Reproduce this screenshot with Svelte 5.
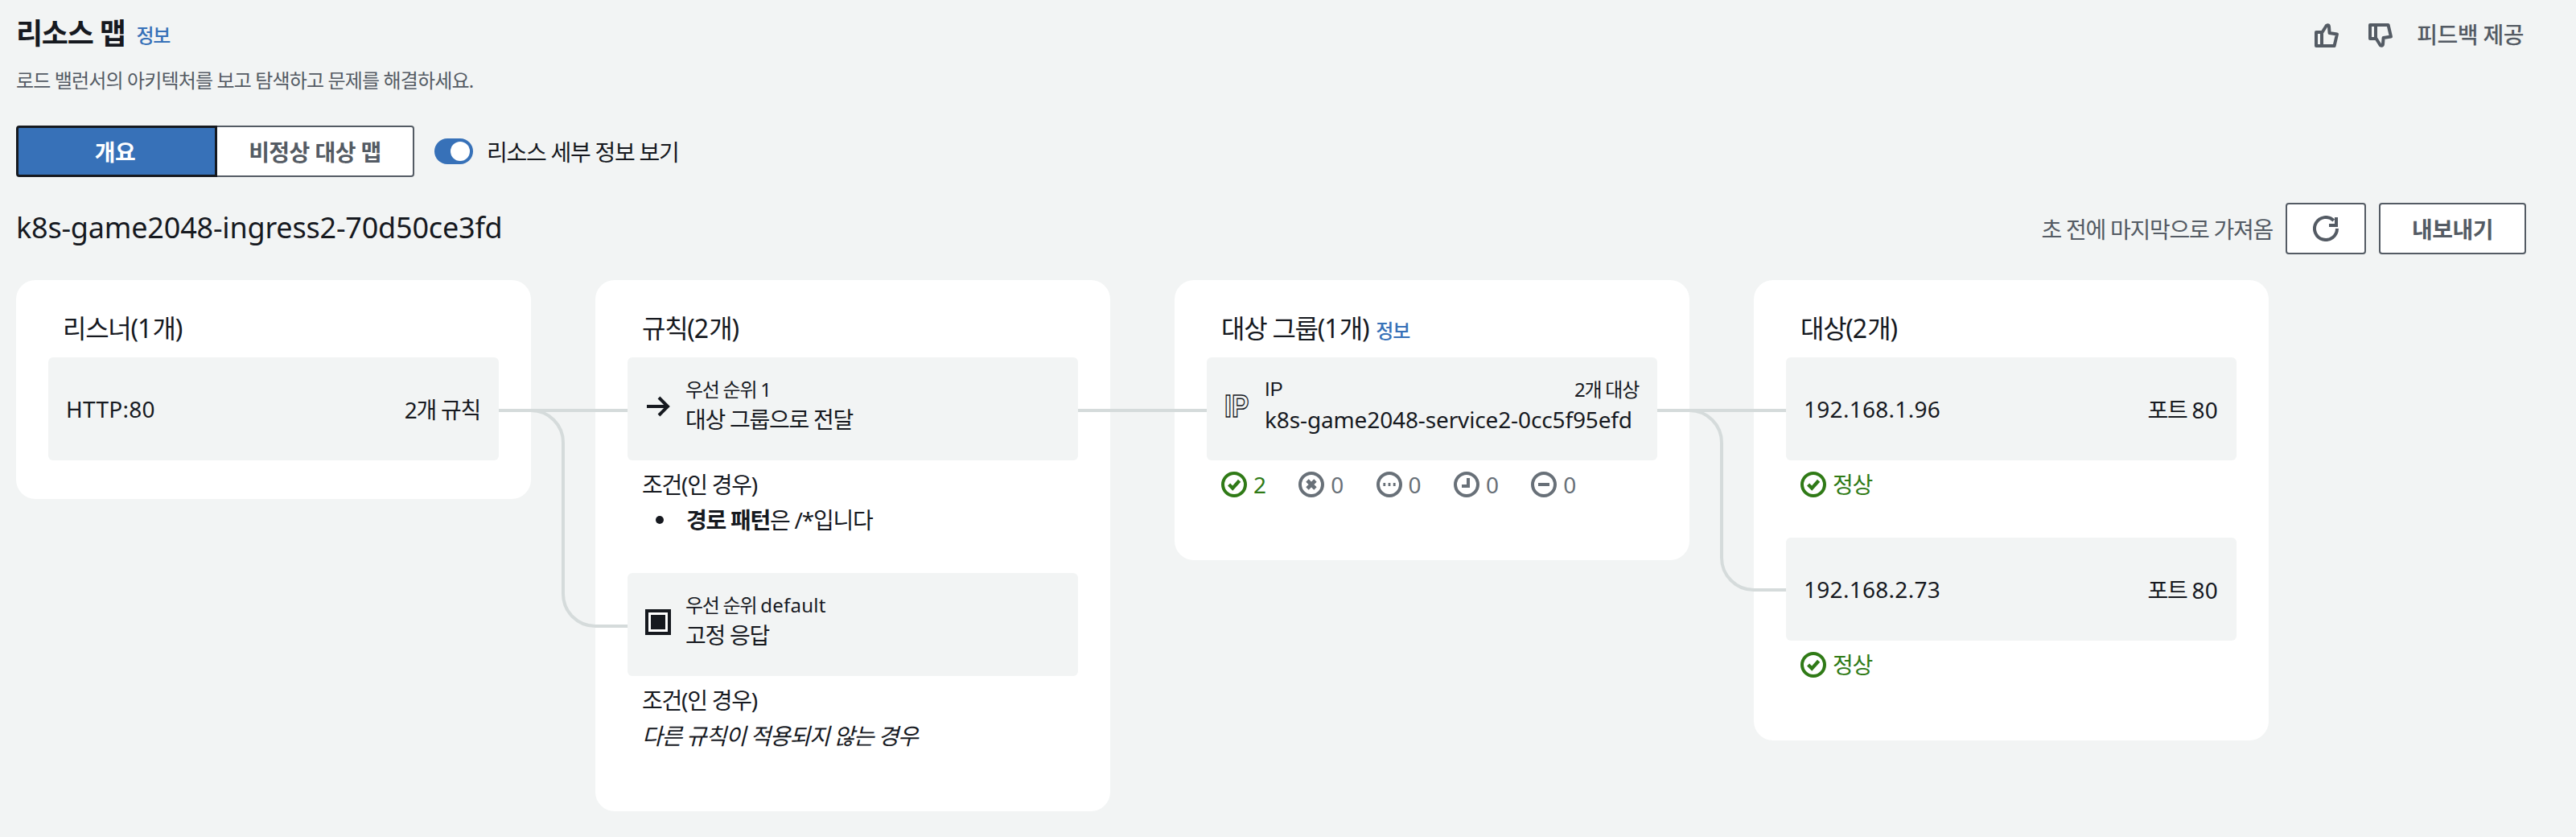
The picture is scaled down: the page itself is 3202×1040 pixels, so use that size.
<script>
  const listeners = [{ name: 'HTTP:80', rules: '2개 규칙' }];
  const counts = [
    { kind: 'ok', n: 2 },
    { kind: 'err', n: 0 },
    { kind: 'pending', n: 0 },
    { kind: 'time', n: 0 },
    { kind: 'minus', n: 0 }
  ];
  const targets = [
    { ip: '192.168.1.96', port: '포트', num: '80' },
    { ip: '192.168.2.73', port: '포트', num: '80' }
  ];
  const thumb = 'M1.500 6H5V14.500H1.500ZM5 6.500L7.500 2.500C7.800 1.600 9.300 1.200 9.500 2.500L9.800 6.500L14.500 7.200L12.800 14.500H5';
</script>

{#snippet status(kind)}
  <svg class="sicon" viewBox="0 0 16 16" aria-hidden="true">
    <circle cx="8" cy="8" r="7" fill="none" stroke="currentColor" stroke-width="2" />
    {#if kind === 'ok'}
      <path d="M4.800 8l2.300 2.300L11.300 5.600" fill="none" stroke="currentColor" stroke-width="2.200" />
    {:else if kind === 'err'}
      <path d="M5.500 5.500l5 5M10.500 5.500l-5 5" fill="none" stroke="currentColor" stroke-width="2.400" />
    {:else if kind === 'pending'}
      <path d="M4.200 8h1.400M7.300 8h1.400M10.400 8h1.400" fill="none" stroke="currentColor" stroke-width="2" />
    {:else if kind === 'time'}
      <path d="M9 4v5H5" fill="none" stroke="currentColor" stroke-width="2" />
    {:else}
      <path d="M4.500 8h7" fill="none" stroke="currentColor" stroke-width="2" />
    {/if}
  </svg>
{/snippet}

<main class="page">
  <header class="top">
    <div class="title-row">
      <h1>리소스 맵</h1>
      <a class="info">정보</a>
      <div class="feedback">
        <svg class="thumb" viewBox="0 0 16 16" aria-hidden="true"><path d={thumb} /></svg>
        <svg class="thumb down" viewBox="0 0 16 16" aria-hidden="true"><path d={thumb} transform="matrix(1 0 0 -1 0 16)" /></svg>
        <span class="fb-text">피드백 제공</span>
      </div>
    </div>
    <p class="sub">로드 밸런서의 아키텍처를 보고 탐색하고 문제를 해결하세요.</p>
    <div class="controls">
      <div class="tabs">
        <button class="tab on">개요</button>
        <button class="tab off">비정상 대상 맵</button>
      </div>
      <span class="toggle"><i></i></span>
      <span class="toggle-label">리소스 세부 정보 보기</span>
    </div>
    <div class="lb-row">
      <h2>k8s-game2048-ingress2-70d50ce3fd</h2>
      <div class="actions">
        <span class="fetched">초 전에 마지막으로 가져옴</span>
        <button class="btn icon-btn" aria-label="새로 고침">
          <svg viewBox="0 0 16 16" aria-hidden="true"><path d="M12.900 3A7 7 0 1 0 15 8M14.500 1V6H10" /></svg>
        </button>
        <button class="btn export">내보내기</button>
      </div>
    </div>
  </header>

  <section class="diagram">
    <svg class="wires" width="2800" height="660" viewBox="0 0 2800 660" aria-hidden="true">
      <path d="M600 162H760M600 162H640a40 40 0 0 1 40 40V390a40 40 0 0 0 40 40H760" />
      <path d="M1320 162H1480" />
      <path d="M2040 162H2200M2040 162H2080a40 40 0 0 1 40 40V345a40 40 0 0 0 40 40H2200" />
    </svg>

    <article class="card">
      <h3>리스너(<span class="la">1</span>개)</h3>
      {#each listeners as l}
        <div class="row"><span class="la">{l.name}</span><span>{l.rules}</span></div>
      {/each}
    </article>

    <article class="card">
      <h3>규칙(<span class="la">2</span>개)</h3>
      <div class="row rule">
        <svg class="ricon" viewBox="0 0 16 16" aria-hidden="true"><path d="M1 8h13M8.500 2.500L14 8l-5.500 5.500" /></svg>
        <div class="stack">
          <small>우선 순위 <span class="la">1</span></small>
          <span>대상 그룹으로 전달</span>
        </div>
      </div>
      <div class="cond">
        <div class="cond-h">조건(인 경우)</div>
        <ul><li><span><b>경로 패턴</b>은 /*입니다</span></li></ul>
      </div>
      <div class="row rule">
        <span class="fixed"><i></i></span>
        <div class="stack">
          <small>우선 순위 <span class="la">default</span></small>
          <span>고정 응답</span>
        </div>
      </div>
      <div class="cond last">
        <div class="cond-h">조건(인 경우)</div>
        <em>다른 규칙이 적용되지 않는 경우</em>
      </div>
    </article>

    <article class="card">
      <h3>대상 그룹(<span class="la">1</span>개) <a class="info">정보</a></h3>
      <div class="row rule">
        <span class="ip">IP</span>
        <div class="stack grow">
          <small class="split"><span class="plain">IP</span><span>2개 대상</span></small>
          <span class="name">k8s-game2048-service2-0cc5f95efd</span>
        </div>
      </div>
      <div class="statuses">
        {#each counts as c}
          <span class="stat {c.kind === 'ok' ? 'green' : 'grey'}">{@render status(c.kind)}<span class="la">{c.n}</span></span>
        {/each}
      </div>
    </article>

    <article class="card">
      <h3>대상(<span class="la">2</span>개)</h3>
      {#each targets as t}
        <div class="target">
          <div class="row"><span class="la">{t.ip}</span><span>{t.port} <span class="la">{t.num}</span></span></div>
          <div class="statuses one">
            <span class="stat green">{@render status('ok')}정상</span>
          </div>
        </div>
      {/each}
    </article>
  </section>
</main>

<style>
  :global(body) {
    margin: 0;
    background: #f2f4f4;
  }
  .page {
    box-sizing: border-box;
    width: 3202px;
    height: 1040px;
    padding: 20px 62px 0 20px;
    background: #f2f4f4;
    color: #16191f;
    font-family: "Noto Sans", "Noto Sans CJK KR", sans-serif;
    font-size: 28px;
    letter-spacing: -0.045em;
    overflow: hidden;
  }
  h1, h2, h3, p, ul { margin: 0; padding: 0; font-weight: 400; }
  .la { letter-spacing: 0.01em; }
  .plain { font-family: "Liberation Sans", sans-serif; letter-spacing: 0; }
  .title-row {
    display: flex;
    align-items: center;
    height: 44px;
  }
  h1 {
    font-size: 36px;
    font-weight: 700;
    line-height: 44px;
  }
  .info {
    color: #3771b8;
    font-size: 24px;
    font-weight: 500;
    margin-left: 14px;
    line-height: 32px;
    padding-top: 4px;
  }
  .feedback {
    margin-left: auto;
    margin-right: 3px;
    display: flex;
    align-items: center;
    color: #545b64;
  }
  .thumb {
    width: 32px;
    height: 32px;
    fill: none;
    stroke: #545b64;
    stroke-width: 2;
    stroke-linejoin: round;
    margin: 4px 35px 0 0;
  }
  .thumb.down { margin-right: 29px; }
  .fb-text { font-weight: 500; letter-spacing: -0.02em; }
  .sub {
    margin-top: 16px;
    line-height: 40px;
    font-size: 24px;
    letter-spacing: -0.036em;
    color: #545b64;
  }
  .controls {
    display: flex;
    align-items: center;
    margin-top: 36px;
    height: 64px;
  }
  .tabs { display: flex; }
  .tab {
    box-sizing: border-box;
    height: 64px;
    font: inherit;
    font-weight: 700;
    letter-spacing: -0.02em;
    padding: 0;
    border-radius: 4px;
    background: #fff;
  }
  .tab.on {
    width: 250px;
    background: #3771b8;
    color: #fff;
    border: 3px solid #16191f;
    border-radius: 4px 0 0 4px;
    padding-right: 4px;
  }
  .tab.off {
    width: 245px;
    color: #545b64;
    border: 2px solid #545b64;
    border-left: none;
    border-radius: 0 4px 4px 0;
  }
  .toggle {
    box-sizing: border-box;
    width: 48px;
    height: 32px;
    border-radius: 16px;
    background: #3771b8;
    margin-left: 25px;
    position: relative;
  }
  .toggle i {
    position: absolute;
    right: 4px;
    top: 4px;
    width: 24px;
    height: 24px;
    border-radius: 50%;
    background: #fff;
  }
  .toggle-label { margin-left: 17px; }
  .lb-row {
    display: flex;
    align-items: center;
    justify-content: space-between;
    margin-top: 32px;
    height: 64px;
  }
  h2 { font-size: 36px; line-height: 44px; letter-spacing: -0.2px; margin-top: -2px; }
  .actions { display: flex; align-items: center; }
  .fetched { color: #545b64; margin-right: 16px; }
  .btn {
    box-sizing: border-box;
    height: 64px;
    border: 2px solid #545b64;
    border-radius: 4px;
    background: #fff;
    color: #545b64;
    font: inherit;
    font-weight: 700;
    letter-spacing: -0.02em;
    padding: 0;
    display: flex;
    align-items: center;
    justify-content: center;
  }
  .icon-btn { width: 100px; }
  .icon-btn svg {
    width: 32px;
    height: 32px;
    fill: none;
    stroke: #545b64;
    stroke-width: 2;
  }
  .export { width: 183px; margin-left: 16px; }
  .diagram {
    position: relative;
    display: grid;
    grid-template-columns: repeat(4, 640px);
    gap: 80px;
    align-items: start;
    margin-top: 32px;
  }
  .wires {
    position: absolute;
    left: 0;
    top: 0;
    fill: none;
    stroke: #d5dbdb;
    stroke-width: 4;
    z-index: 1;
  }
  .card {
    box-sizing: border-box;
    background: #fff;
    border-radius: 24px;
    padding: 40px 40px 48px;
  }
  h3 {
    font-size: 32px;
    line-height: 40px;
    margin: 0 0 16px 18px;
  }
  h3 .info { margin-left: 2px; padding: 0; }
  .row {
    box-sizing: border-box;
    height: 128px;
    background: #f2f4f4;
    border-radius: 6px;
    padding: 0 23px 0 22px;
    display: flex;
    align-items: center;
    justify-content: space-between;
  }
  .row.rule {
    justify-content: flex-start;
    padding-bottom: 6px;
  }
  .ricon {
    width: 32px;
    height: 32px;
    fill: none;
    stroke: #16191f;
    stroke-width: 2;
    flex: none;
    margin-right: 18px;
  }
  .stack { display: flex; flex-direction: column; }
  .grow { flex: 1; }
  .stack small { font-size: 24px; line-height: 32px; }
  .stack > span { line-height: 42px; }
  .stack > .name { letter-spacing: -0.13px; }
  .split { display: flex; justify-content: space-between; }
  .fixed {
    box-sizing: border-box;
    width: 32px;
    height: 32px;
    flex: none;
    margin-right: 18px;
    border: 4px solid #16191f;
    background: #fff;
    padding: 3px;
    display: flex;
  }
  .fixed i { flex: 1; background: #16191f; }
  .ip {
    width: 32px;
    flex: none;
    margin-right: 18px;
    font-family: "Liberation Sans", sans-serif;
    font-size: 39px;
    font-weight: 700;
    letter-spacing: 0;
    line-height: 40px;
    color: #f2f4f4;
    -webkit-text-stroke: 1.5px #16191f;
    transform: scaleX(0.82);
    transform-origin: left center;
  }
  .cond { padding: 10px 18px 26px; }
  .cond.last { padding-bottom: 24px; }
  .cond + .row { margin-top: 18px; }
  .cond-h { line-height: 40px; }
  ul { list-style: none; line-height: 44px; margin-top: 2px; }
  li { display: flex; align-items: center; }
  li::before {
    content: "";
    width: 10px;
    height: 10px;
    border-radius: 50%;
    background: #16191f;
    margin: 0 28px 0 17px;
    flex: none;
  }
  em { display: block; line-height: 44px; margin-top: 2px; }
  .statuses {
    display: flex;
    gap: 40px;
    padding: 14px 18px 30px;
  }
  .stat {
    display: flex;
    align-items: center;
    gap: 8px;
    line-height: 32px;
  }
  .sicon { width: 32px; height: 32px; flex: none; }
  .green { color: #2f7a16; }
  .grey { color: #687078; }
  .target + .target { margin-top: 20px; }
</style>
